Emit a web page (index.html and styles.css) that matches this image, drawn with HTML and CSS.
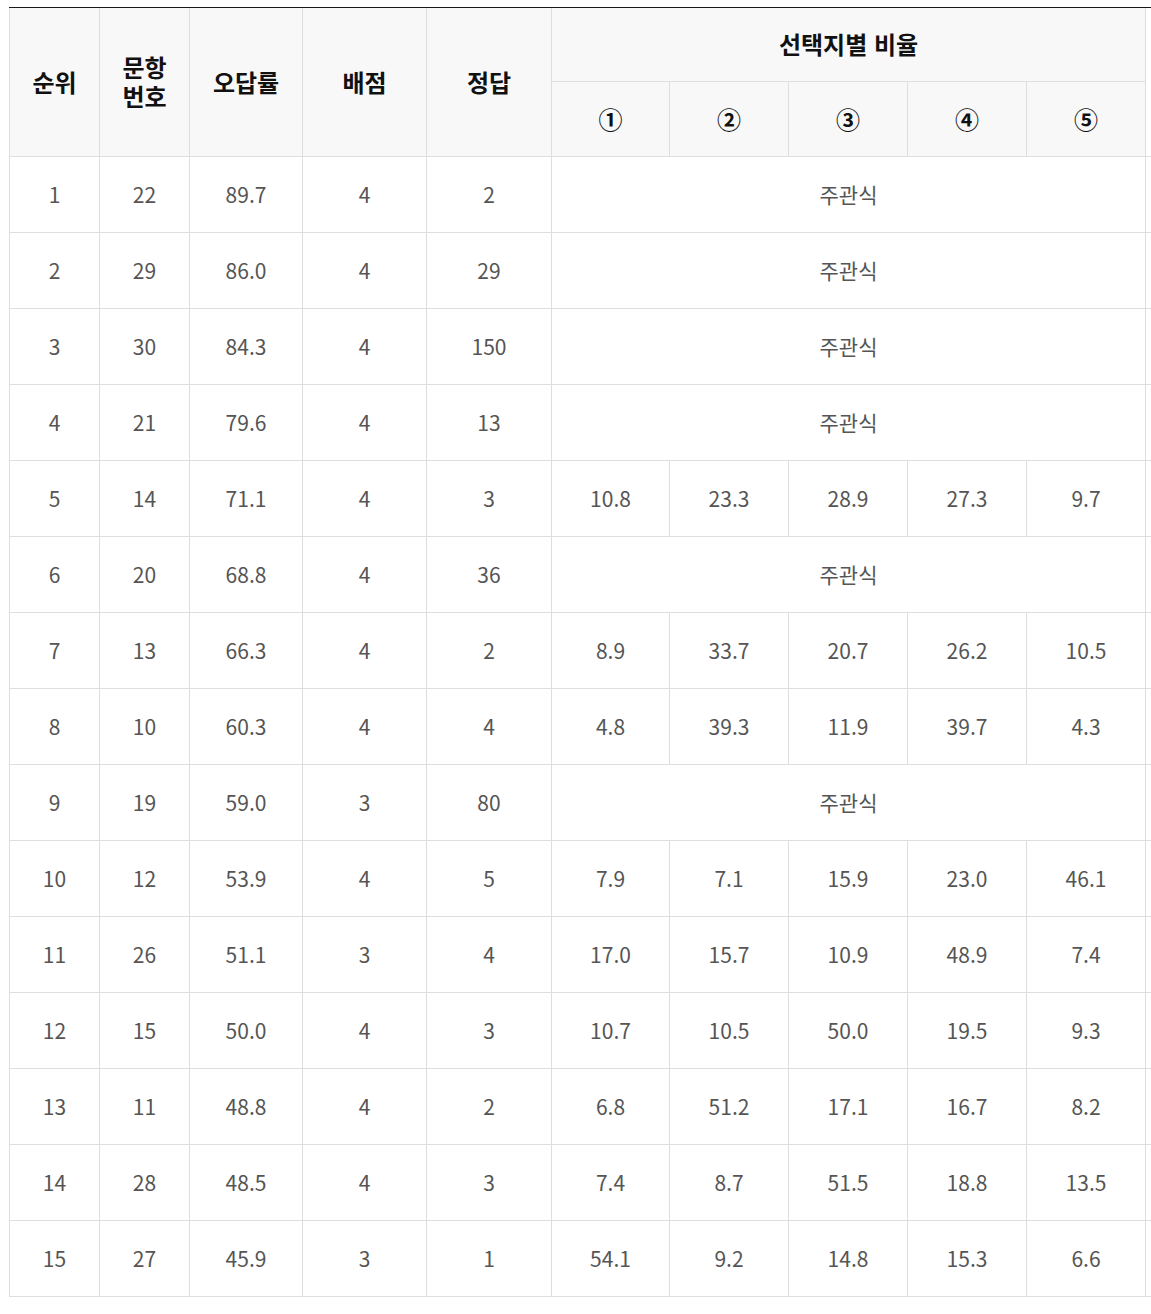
FILE: index.html
```html
<!DOCTYPE html>
<html lang="ko">
<head>
<meta charset="utf-8">
<link rel="stylesheet" href="styles.css">
</head>
<body>
<div class="wrap">
<table class="tbl">
<colgroup>
<col class="c1"><col class="c2"><col class="c3"><col class="c4"><col class="c5">
<col class="c6a"><col class="c6"><col class="c6"><col class="c6"><col class="c6"><col class="cx">
</colgroup>
<thead>
<tr class="h1">
<th rowspan="2">순위</th>
<th rowspan="2">문항<br>번호</th>
<th rowspan="2">오답률</th>
<th rowspan="2">배점</th>
<th rowspan="2">정답</th>
<th colspan="5">선택지별 비율</th>
<th class="x" rowspan="2"></th>
</tr>
<tr class="h2">
<th>①</th><th>②</th><th>③</th><th>④</th><th>⑤</th>
</tr>
</thead>
<tbody>
<tr><td>1</td><td>22</td><td>89.7</td><td>4</td><td>2</td><td colspan="5">주관식</td><td class="x"></td></tr>
<tr><td>2</td><td>29</td><td>86.0</td><td>4</td><td>29</td><td colspan="5">주관식</td><td class="x"></td></tr>
<tr><td>3</td><td>30</td><td>84.3</td><td>4</td><td>150</td><td colspan="5">주관식</td><td class="x"></td></tr>
<tr><td>4</td><td>21</td><td>79.6</td><td>4</td><td>13</td><td colspan="5">주관식</td><td class="x"></td></tr>
<tr><td>5</td><td>14</td><td>71.1</td><td>4</td><td>3</td><td>10.8</td><td>23.3</td><td>28.9</td><td>27.3</td><td>9.7</td><td class="x"></td></tr>
<tr><td>6</td><td>20</td><td>68.8</td><td>4</td><td>36</td><td colspan="5">주관식</td><td class="x"></td></tr>
<tr><td>7</td><td>13</td><td>66.3</td><td>4</td><td>2</td><td>8.9</td><td>33.7</td><td>20.7</td><td>26.2</td><td>10.5</td><td class="x"></td></tr>
<tr><td>8</td><td>10</td><td>60.3</td><td>4</td><td>4</td><td>4.8</td><td>39.3</td><td>11.9</td><td>39.7</td><td>4.3</td><td class="x"></td></tr>
<tr><td>9</td><td>19</td><td>59.0</td><td>3</td><td>80</td><td colspan="5">주관식</td><td class="x"></td></tr>
<tr><td>10</td><td>12</td><td>53.9</td><td>4</td><td>5</td><td>7.9</td><td>7.1</td><td>15.9</td><td>23.0</td><td>46.1</td><td class="x"></td></tr>
<tr><td>11</td><td>26</td><td>51.1</td><td>3</td><td>4</td><td>17.0</td><td>15.7</td><td>10.9</td><td>48.9</td><td>7.4</td><td class="x"></td></tr>
<tr><td>12</td><td>15</td><td>50.0</td><td>4</td><td>3</td><td>10.7</td><td>10.5</td><td>50.0</td><td>19.5</td><td>9.3</td><td class="x"></td></tr>
<tr><td>13</td><td>11</td><td>48.8</td><td>4</td><td>2</td><td>6.8</td><td>51.2</td><td>17.1</td><td>16.7</td><td>8.2</td><td class="x"></td></tr>
<tr><td>14</td><td>28</td><td>48.5</td><td>4</td><td>3</td><td>7.4</td><td>8.7</td><td>51.5</td><td>18.8</td><td>13.5</td><td class="x"></td></tr>
<tr><td>15</td><td>27</td><td>45.9</td><td>3</td><td>1</td><td>54.1</td><td>9.2</td><td>14.8</td><td>15.3</td><td>6.6</td><td class="x"></td></tr>
</tbody>
</table>
</div>
</body>
</html>
```

FILE: styles.css
```css
html, body {
  margin: 0;
  padding: 0;
  background: #fff;
}
body {
  font-family: "Noto Sans CJK KR", "Noto Sans", sans-serif;
  overflow: hidden;
}
.wrap {
  margin: 7px 0 0 9px;
  width: 1142px;
  overflow: hidden;
  border-top: 1px solid #1a1a1a;
}
.tbl {
  border-collapse: collapse;
  table-layout: fixed;
  width: 1160px;
  margin-top: -1px;
}
.c1 { width: 90px; }
.c2 { width: 90px; }
.c3 { width: 113px; }
.c4 { width: 124px; }
.c5 { width: 125px; }
.c6a { width: 118px; }
.c6 { width: 119px; }
.cx { width: 25px; }
.tbl th, .tbl td {
  border: 1px solid #dedede;
  padding: 0;
  text-align: center;
  vertical-align: middle;
}
.tbl th {
  background: #f8f8f8;
  color: #111;
  font-weight: 700;
  font-size: 24px;
  line-height: 29px;
}
.tbl thead tr:first-child th {
  border-top: 0;
}
.tbl .h1 { height: 74px; }
.tbl .h2 { height: 75px; }
.tbl td {
  height: 75px;
  color: #555;
  font-size: 21px;
  font-weight: 400;
}
.tbl th.x {
  background: #fff;
  border-bottom: 1px solid #dedede;
}
.tbl .x {
  border-right: 0;
}
```
